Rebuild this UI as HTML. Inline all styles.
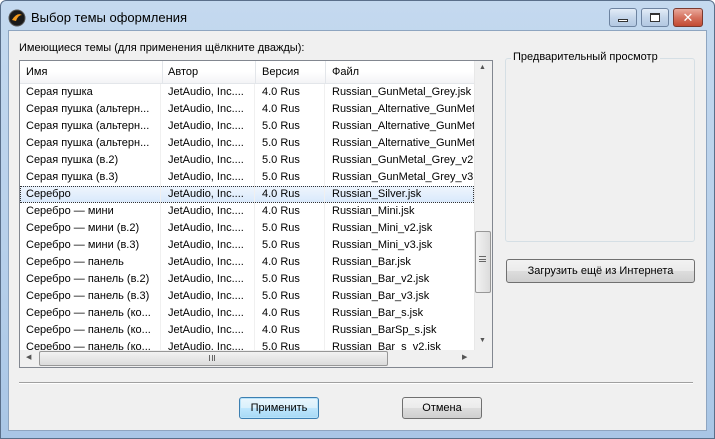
<!DOCTYPE html><html><head><meta charset="utf-8"><style>
*{margin:0;padding:0;box-sizing:border-box}
body{width:715px;height:439px;overflow:hidden;background:#fff;font-family:"Liberation Sans","DejaVu Sans",sans-serif;font-size:11px;color:#000;position:relative}
.win{position:absolute;left:0;top:0;width:715px;height:439px;background:linear-gradient(#c4d9ef,#b6cfea 60%,#a9c6e6);border:1px solid #5a6f8a;border-radius:6px 6px 0 0}
.client{position:absolute;left:8px;top:30px;width:699px;height:401px;background:#f0f0f0;border:1px solid #8ea5c0}
.title{position:absolute;left:31px;top:10px;font-size:13px;color:#000}
.a{position:absolute}
.list{left:19px;top:60px;width:474px;height:308px;background:#fff;border:1px solid #828790}
.hdr{left:20px;top:61px;width:454px;height:23px;background:linear-gradient(#fff,#fff 50%,#f3f4f6);border-bottom:1px solid #e3e6ea}
.sep{position:absolute;top:0;width:1px;height:23px;background:#e3e6ea}
.row{position:absolute;left:20px;width:454px;height:17px;white-space:nowrap;overflow:hidden}
.row span,.hdr span{position:absolute;top:2px}
.hdr span{top:5px}
.sel{background:linear-gradient(#eef5fd,#d9e9fb);border:1px dotted #333}
.btn{position:absolute;border:1px solid #707070;border-radius:3px;background:linear-gradient(#f2f2f2,#ebebeb 50%,#dddddd 51%,#cfcfcf);text-align:center;line-height:20px;font-size:11px}
</style></head><body>
<div class="win"></div>
<svg class="a" style="left:8px;top:9px" width="18" height="18"><circle cx="9" cy="9" r="8" fill="#1a1a1a"/><path d="M4 11 Q9 3 14 6 Q10 6 8 12 Z" fill="#f39a1e"/><circle cx="9" cy="9" r="8" fill="none" stroke="#555" stroke-width="1"/></svg>
<div class="title">Выбор темы оформления</div>
<div class="a" style="left:609px;top:8px;width:28px;height:19px;border:1px solid #6d83a0;border-radius:3px;background:linear-gradient(#e3ecf7,#c5d6ea 50%,#b3c8e2)"><div class="a" style="left:8px;top:10px;width:10px;height:3px;border:1px solid #333;background:#fff"></div></div>
<div class="a" style="left:641px;top:8px;width:28px;height:19px;border:1px solid #6d83a0;border-radius:3px;background:linear-gradient(#e3ecf7,#c5d6ea 50%,#b3c8e2)"><div class="a" style="left:8px;top:4px;width:10px;height:9px;border:1px solid #333;border-top-width:2px;background:#fff"></div></div>
<div class="a" style="left:673px;top:8px;width:30px;height:19px;border:1px solid #7a3a30;border-radius:3px;background:linear-gradient(#e9a99c,#d5725f 50%,#c24b33);color:#fff;font-weight:bold;font-size:13px;text-align:center;line-height:17px">✕</div>
<div class="client"></div>
<div class="a" style="left:19px;top:42px">Имеющиеся темы (для применения щёлкните дважды):</div>
<div class="a list"></div>
<div class="a hdr"><span style="left:6px">Имя</span><div class="sep" style="left:142px"></div><span style="left:148px">Автор</span><div class="sep" style="left:235px"></div><span style="left:242px">Версия</span><div class="sep" style="left:305px"></div><span style="left:312px">Файл</span></div>
<div class="row" style="top:84px"><span style="left:6px">Серая пушка</span><span style="left:148px">JetAudio, Inc....</span><span style="left:242px">4.0 Rus</span><span style="left:312px">Russian_GunMetal_Grey.jsk</span></div>
<div class="row" style="top:101px"><span style="left:6px">Серая пушка (альтерн...</span><span style="left:148px">JetAudio, Inc....</span><span style="left:242px">4.0 Rus</span><span style="left:312px">Russian_Alternative_GunMeta</span></div>
<div class="row" style="top:118px"><span style="left:6px">Серая пушка (альтерн...</span><span style="left:148px">JetAudio, Inc....</span><span style="left:242px">5.0 Rus</span><span style="left:312px">Russian_Alternative_GunMeta</span></div>
<div class="row" style="top:135px"><span style="left:6px">Серая пушка (альтерн...</span><span style="left:148px">JetAudio, Inc....</span><span style="left:242px">5.0 Rus</span><span style="left:312px">Russian_Alternative_GunMeta</span></div>
<div class="row" style="top:152px"><span style="left:6px">Серая пушка (в.2)</span><span style="left:148px">JetAudio, Inc....</span><span style="left:242px">5.0 Rus</span><span style="left:312px">Russian_GunMetal_Grey_v2.j</span></div>
<div class="row" style="top:169px"><span style="left:6px">Серая пушка (в.3)</span><span style="left:148px">JetAudio, Inc....</span><span style="left:242px">5.0 Rus</span><span style="left:312px">Russian_GunMetal_Grey_v3.j</span></div>
<div class="row sel" style="top:186px"><span style="left:5px;top:1px">Серебро</span><span style="left:147px;top:1px">JetAudio, Inc....</span><span style="left:241px;top:1px">4.0 Rus</span><span style="left:311px;top:1px">Russian_Silver.jsk</span></div>
<div class="row" style="top:203px"><span style="left:6px">Серебро — мини</span><span style="left:148px">JetAudio, Inc....</span><span style="left:242px">4.0 Rus</span><span style="left:312px">Russian_Mini.jsk</span></div>
<div class="row" style="top:220px"><span style="left:6px">Серебро — мини (в.2)</span><span style="left:148px">JetAudio, Inc....</span><span style="left:242px">5.0 Rus</span><span style="left:312px">Russian_Mini_v2.jsk</span></div>
<div class="row" style="top:237px"><span style="left:6px">Серебро — мини (в.3)</span><span style="left:148px">JetAudio, Inc....</span><span style="left:242px">5.0 Rus</span><span style="left:312px">Russian_Mini_v3.jsk</span></div>
<div class="row" style="top:254px"><span style="left:6px">Серебро — панель</span><span style="left:148px">JetAudio, Inc....</span><span style="left:242px">4.0 Rus</span><span style="left:312px">Russian_Bar.jsk</span></div>
<div class="row" style="top:271px"><span style="left:6px">Серебро — панель (в.2)</span><span style="left:148px">JetAudio, Inc....</span><span style="left:242px">5.0 Rus</span><span style="left:312px">Russian_Bar_v2.jsk</span></div>
<div class="row" style="top:288px"><span style="left:6px">Серебро — панель (в.3)</span><span style="left:148px">JetAudio, Inc....</span><span style="left:242px">5.0 Rus</span><span style="left:312px">Russian_Bar_v3.jsk</span></div>
<div class="row" style="top:305px"><span style="left:6px">Серебро — панель (ко...</span><span style="left:148px">JetAudio, Inc....</span><span style="left:242px">4.0 Rus</span><span style="left:312px">Russian_Bar_s.jsk</span></div>
<div class="row" style="top:322px"><span style="left:6px">Серебро — панель (ко...</span><span style="left:148px">JetAudio, Inc....</span><span style="left:242px">4.0 Rus</span><span style="left:312px">Russian_BarSp_s.jsk</span></div>
<div class="row" style="top:339px;height:11px;overflow:hidden"><span style="left:6px">Серебро — панель (ко...</span><span style="left:148px">JetAudio, Inc....</span><span style="left:242px">5.0 Rus</span><span style="left:312px">Russian_Bar_s_v2.jsk</span></div>
<div class="a" style="left:160px;top:84px;width:1px;height:266px;background:#f0f0f0"></div>
<div class="a" style="left:254px;top:84px;width:1px;height:266px;background:#f0f0f0"></div>
<div class="a" style="left:324px;top:84px;width:1px;height:266px;background:#f0f0f0"></div>
<div class="a" style="left:474px;top:61px;width:18px;height:289px;background:#f0f0f0;border-left:1px solid #e8e8e8"></div>
<div class="a" style="left:479px;top:64px;font-size:7px;color:#555">▲</div>
<div class="a" style="left:479px;top:337px;font-size:7px;color:#555">▼</div>
<div class="a" style="left:475px;top:231px;width:16px;height:62px;border:1px solid #979797;border-radius:2px;background:linear-gradient(90deg,#f2f2f2,#dcdcdc)"></div>
<div class="a" style="left:479px;top:256px;width:7px;height:6px;border-top:1px solid #666;border-bottom:1px solid #666"><div style="margin-top:2px;height:1px;background:#666"></div></div>
<div class="a" style="left:20px;top:350px;width:454px;height:17px;background:#f0f0f0"></div>
<div class="a" style="left:474px;top:350px;width:18px;height:17px;background:#f0f0f0"></div>
<div class="a" style="left:26px;top:353px;font-size:7px;color:#555">◀</div>
<div class="a" style="left:462px;top:353px;font-size:7px;color:#555">▶</div>
<div class="a" style="left:39px;top:351px;width:349px;height:15px;border:1px solid #979797;border-radius:2px;background:linear-gradient(#f2f2f2,#dcdcdc)"></div>
<div class="a" style="left:209px;top:355px;width:6px;height:6px;border-left:1px solid #666;border-right:1px solid #666"><div style="margin-left:2px;width:1px;height:6px;background:#666"></div></div>
<div class="a" style="left:505px;top:58px;width:190px;height:184px;border:1px solid #d5dfe5;border-radius:3px"></div>
<div class="a" style="left:511px;top:51px;background:#f0f0f0;padding:0 2px">Предварительный просмотр</div>
<div class="btn" style="left:506px;top:259px;width:189px;height:24px;line-height:22px">Загрузить ещё из Интернета</div>
<div class="a" style="left:19px;top:382px;width:674px;height:2px;border-top:1px solid #a0a0a0;border-bottom:1px solid #fff"></div>
<div class="btn" style="left:239px;top:397px;width:80px;height:22px;border-color:#3c7fb1;background:linear-gradient(#eaf6fd,#d9f0fc 50%,#bee6fd 51%,#a7d9f5);box-shadow:inset 0 0 0 1px #b8e2f9">Применить</div>
<div class="btn" style="left:402px;top:397px;width:80px;height:22px">Отмена</div>
</body></html>
